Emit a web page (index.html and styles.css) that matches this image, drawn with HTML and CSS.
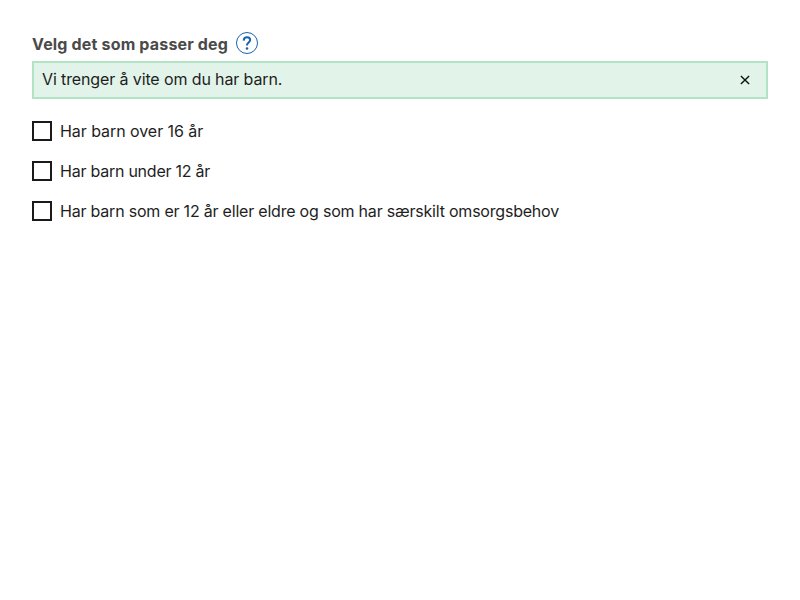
FILE: index.html
```html
<!DOCTYPE html>
<html lang="nb">
<head>
<meta charset="utf-8">
<title>Skjema</title>
<link rel="stylesheet" href="styles.css">
</head>
<body>
<main class="form">
  <div class="legend">
    <span class="legend-text">Velg det som passer deg</span>
    <button class="help" type="button" aria-label="Hjelp">
      <svg width="22" height="22" viewBox="0 0 22 22" fill="none"><circle cx="11" cy="11" r="10.5" stroke="#1a62ae"/><path d="M7.7 8.6C7.8 6.6 9.1 5.3 11 5.3c1.9 0 3.2 1.1 3.2 2.8 0 2.3-3.2 2.6-3.2 5v.4" stroke="#1a62ae" stroke-width="2"/><circle cx="11" cy="16.5" r="1.3" fill="#1a62ae"/></svg>
    </button>
  </div>
  <div class="notice">
    <span class="notice-text">Vi trenger å vite om du har barn.</span>
    <button class="close" type="button" aria-label="Lukk">
      <svg width="10" height="10" viewBox="0 0 10 10"><path d="M.9.9l8.2 8.2M9.1.9L.9 9.1" stroke="#111" stroke-width="1.4"/></svg>
    </button>
  </div>
  <div class="options">
    <label class="option over16"><input class="box" type="checkbox">Har barn over 16 år</label>
    <label class="option under12"><input class="box" type="checkbox">Har barn under 12 år</label>
    <label class="option care"><input class="box" type="checkbox">Har barn som er 12 år eller eldre og som har særskilt omsorgsbehov</label>
  </div>
</main>
</body>
</html>
```
FILE: styles.css
```css
* { box-sizing: border-box; }
body { margin: 0; background: #fff; color: #1e1e1e; font: 16px/24px Inter, sans-serif; }
.form { padding: 32px; }
.legend { display: flex; gap: 8px; height: 29px; }
.legend-text { font-weight: 700; color: #4a4a4a; letter-spacing: 0.17px; }
button { padding: 0; border: 0; background: none; }
.help { width: 22px; height: 22px; }
.help svg, .close svg { display: block; }
.notice { display: flex; align-items: center; justify-content: space-between; height: 38px; padding: 0 16px 0 8px; border: 2px solid #b2e3c4; background: #e2f4e9; }
.notice-text { padding-bottom: 2px; letter-spacing: -0.12px; }
.options { display: grid; gap: 16px; margin-top: 20px; }
.option { display: flex; align-items: center; gap: 8px; height: 24px; }
.over16 { letter-spacing: -0.06px; }
.under12 { letter-spacing: -0.24px; }
.care { letter-spacing: -0.21px; }
.box { appearance: none; flex: none; width: 20px; height: 20px; margin: 0; border: 2px solid #1a1a1a; background: #fff; }
```
